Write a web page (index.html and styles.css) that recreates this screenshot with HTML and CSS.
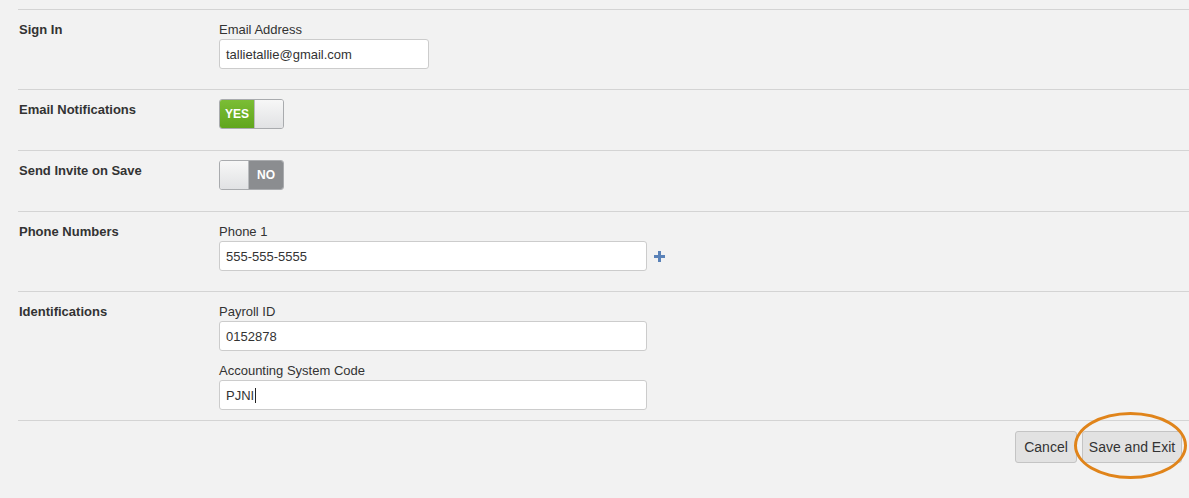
FILE: index.html
```html
<!DOCTYPE html>
<html>
<head>
<meta charset="utf-8">
<link rel="stylesheet" href="styles.css">
</head>
<body>
<div class="page">
  <div class="row">
    <div class="row-label">Sign In</div>
    <div class="row-body">
      <div class="field">
        <div class="field-label">Email Address</div>
        <div class="input input-short">tallietallie@gmail.com</div>
      </div>
    </div>
  </div>
  <div class="row row-toggle">
    <div class="row-label">Email Notifications</div>
    <div class="row-body">
      <div class="toggle toggle-on">
        <span class="toggle-yes">YES</span><span class="toggle-knob"></span>
      </div>
    </div>
  </div>
  <div class="row row-toggle">
    <div class="row-label">Send Invite on Save</div>
    <div class="row-body">
      <div class="toggle toggle-off">
        <span class="toggle-knob"></span><span class="toggle-no">NO</span>
      </div>
    </div>
  </div>
  <div class="row">
    <div class="row-label">Phone Numbers</div>
    <div class="row-body">
      <div class="field">
        <div class="field-label">Phone 1</div>
        <div class="input-line">
          <div class="input input-long">555-555-5555</div>
          <svg class="plus" width="11" height="11" viewBox="0 0 11 11"><rect x="4" y="0" width="3" height="11" fill="#5a82b8"/><rect x="0" y="4" width="11" height="3" fill="#5a82b8"/></svg>
        </div>
      </div>
    </div>
  </div>
  <div class="row row-last">
    <div class="row-label">Identifications</div>
    <div class="row-body">
      <div class="field">
        <div class="field-label">Payroll ID</div>
        <div class="input input-long">0152878</div>
      </div>
      <div class="field field-next">
        <div class="field-label">Accounting System Code</div>
        <div class="input input-long">PJNI<span class="caret"></span></div>
      </div>
    </div>
  </div>
  <div class="footer">
    <button class="btn btn-cancel">Cancel</button>
    <button class="btn btn-save">Save and Exit<span class="highlight"></span></button>
  </div>
</div>
</body>
</html>
```
FILE: styles.css
```css
html, body {
  margin: 0;
  padding: 0;
  background: #f2f2f2;
}
body {
  font-family: "Liberation Sans", Arial, sans-serif;
  font-size: 13px;
  color: #333;
  width: 1189px;
  height: 498px;
  overflow: hidden;
}
.page {
  padding-top: 9px;
  margin-left: 18px;
}
.row {
  display: grid;
  grid-template-columns: 201px 1fr;
  border-top: 1px solid #d4d4d4;
  padding: 11px 0 20px;
}
.row-toggle {
  padding-bottom: 21px;
}
.row-last {
  padding-bottom: 10px;
}
.row-label {
  padding-left: 1px;
  font-weight: bold;
  line-height: 18px;
  color: #333;
}
.field-label {
  line-height: 18px;
  color: #333;
}
.field-next {
  margin-top: 11px;
}
.input {
  box-sizing: border-box;
  height: 30px;
  background: #fff;
  border: 1px solid #cccccc;
  border-radius: 3px;
  padding: 1px 6px 0;
  color: #333;
  font-size: 13px;
  display: flex;
  align-items: center;
}
.input-short {
  width: 210px;
}
.input-long {
  width: 428px;
}
.input-line {
  display: flex;
  align-items: center;
  gap: 7px;
}
.plus {
  display: block;
  margin-top: 1px;
}
.caret {
  display: inline-block;
  width: 1px;
  height: 15px;
  background: #222;
  margin-left: 1px;
}
.toggle {
  box-sizing: border-box;
  display: flex;
  width: 65px;
  height: 30px;
  margin-top: -2px;
  border: 1px solid #a9abae;
  border-radius: 3px;
  overflow: hidden;
  font-weight: bold;
  font-size: 12px;
  color: #fff;
}
.toggle-yes {
  width: 34px;
  background: linear-gradient(#7bbd35, #60a61d);
  display: flex;
  align-items: center;
  justify-content: center;
}
.toggle-no {
  flex: 1;
  background: #8b8d90;
  display: flex;
  align-items: center;
  justify-content: center;
}
.toggle-knob {
  background: linear-gradient(#f7f7f7, #e1e2e4);
}
.toggle-on .toggle-knob {
  flex: 1;
  border-left: 1px solid #b9bbbe;
}
.toggle-off .toggle-knob {
  width: 28px;
  border-right: 1px solid #b9bbbe;
}
.footer {
  border-top: 1px solid #d4d4d4;
  display: flex;
  justify-content: flex-end;
  gap: 5px;
  padding: 10px 7px 0 0;
}
.btn {
  position: relative;
  height: 32px;
  box-sizing: border-box;
  padding: 0;
  white-space: nowrap;
  text-align: center;
  background: #e2e2e2;
  border: 1px solid #c4c4c4;
  border-radius: 3px;
  font-family: "Liberation Sans", Arial, sans-serif;
  font-size: 14px;
  color: #333;
}
.btn-cancel {
  width: 62px;
}
.btn-save {
  width: 100px;
}
.highlight {
  position: absolute;
  left: -9px;
  top: -20px;
  width: 113px;
  height: 67px;
  box-sizing: border-box;
  border: 3.5px solid #e0841a;
  border-radius: 50%;
  pointer-events: none;
}
```
